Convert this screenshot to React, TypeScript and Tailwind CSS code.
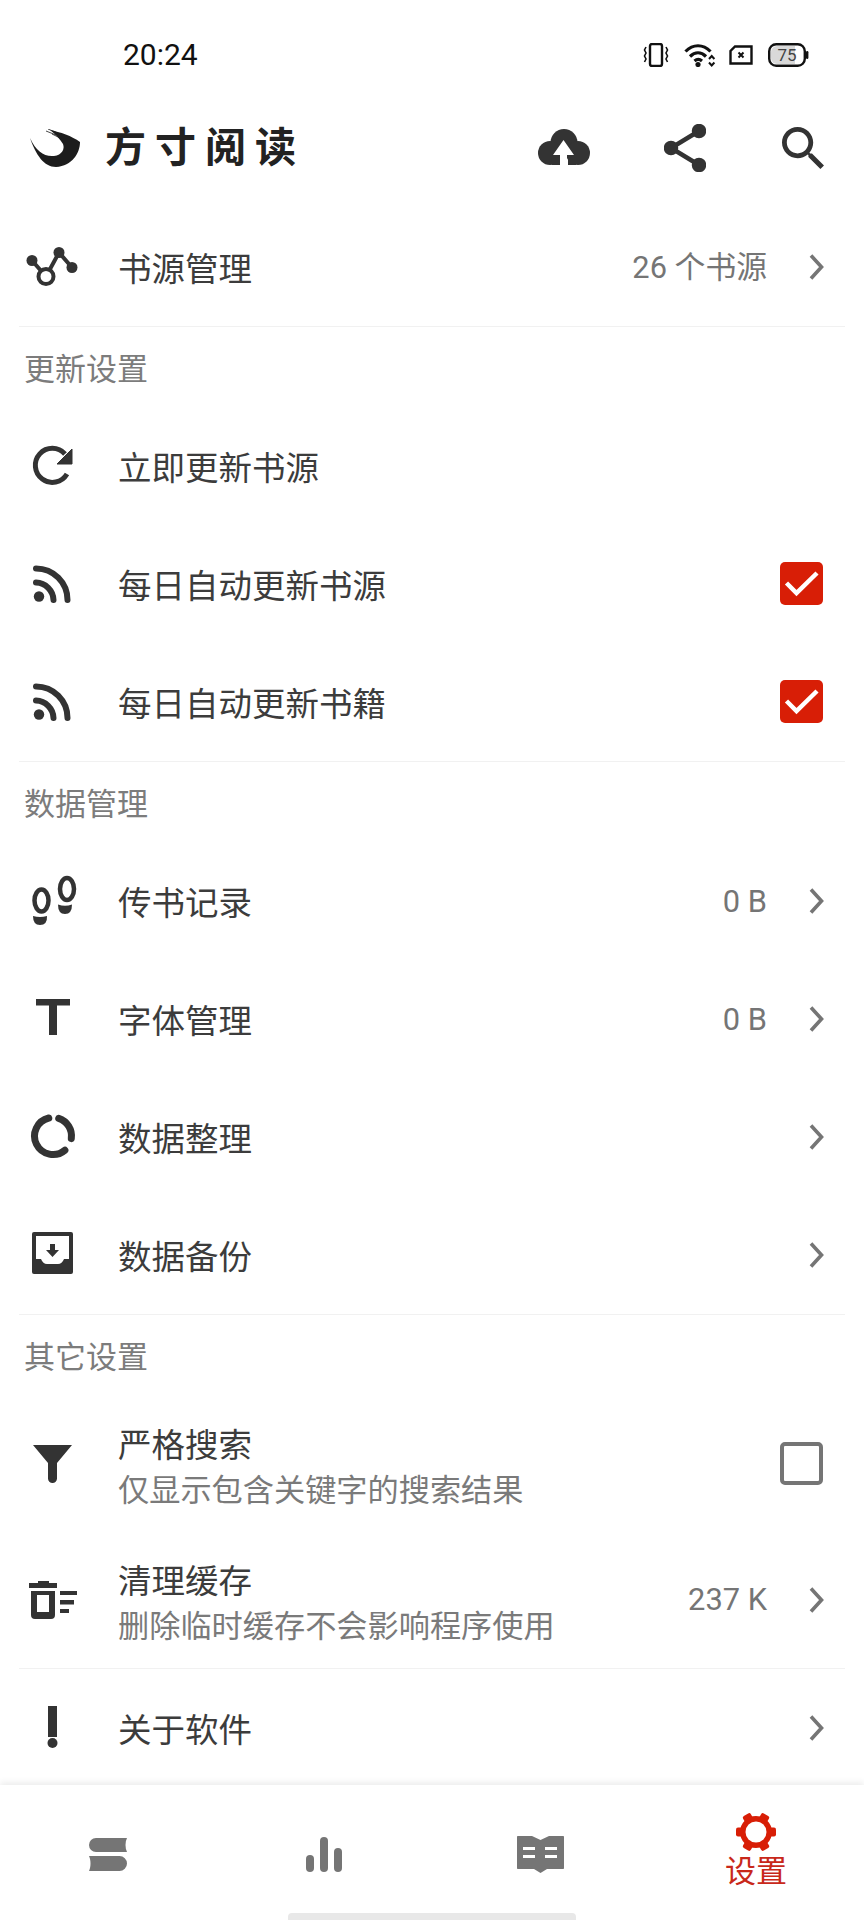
import { FC, ReactNode } from "react";

const ICON = "#333333";
const RED = "#d81e06";

const Icon: FC<{ children: ReactNode }> = ({ children }) => (
  <svg viewBox="0 0 64 64" className="ml-[20px] h-[64px] w-[64px] shrink-0" fill={ICON}>
    {children}
  </svg>
);

const Chevron: FC = () => (
  <svg viewBox="0 0 32 32" className="h-[32px] w-[32px] shrink-0" fill="none" stroke="#757575" strokeWidth="3.6">
    <path d="M11 4.500 21.500 16 11 27.500" />
  </svg>
);

const Checkbox: FC<{ checked?: boolean }> = ({ checked }) =>
  checked ? (
    <div className="mb-[2px] mr-[41px] h-[43px] w-[43px] shrink-0 rounded-[5px] bg-[#d81e06]">
      <svg viewBox="0 0 43 43" className="h-[43px] w-[43px]" fill="none" stroke="#ffffff" strokeWidth="4.5">
        <path d="M6.500 21 16.500 31 37 11" />
      </svg>
    </div>
  ) : (
    <div className="mr-[41px] h-[43px] w-[43px] shrink-0 rounded-[5px] border-[4px] border-[#757575]" />
  );

type RowProps = {
  icon: ReactNode;
  title: string;
  sub?: string;
  value?: string;
  arrow?: boolean;
  right?: ReactNode;
  height?: string;
};

const Row: FC<RowProps> = ({ icon, title, sub, value, arrow, right, height = "h-[118px]" }) => (
  <div className={`flex items-center ${height}`}>
    {icon}
    <div className={`ml-[34px] min-w-0 flex-1 ${sub ? "pt-[9px]" : "pt-[4px]"}`}>
      <div className="text-[33.5px] leading-[43px] text-[#3c3c3c]">{title}</div>
      {sub && <div className="mt-[2px] text-[31.2px] leading-[43px] text-[#7a7a7a]">{sub}</div>}
    </div>
    {value && <span className="mr-[33px] pt-[2px] text-[30.8px] text-[#757575]">{value}</span>}
    {arrow && (
      <div className="mr-[32px]">
        <Chevron />
      </div>
    )}
    {right}
  </div>
);

const Divider: FC = () => <div className="mx-[19px] h-px bg-[#f1f1f1]" />;

const Section: FC<{ title: string }> = ({ title }) => (
  <div className="flex h-[80px] items-center pl-[24px] pt-[6px] text-[31px] text-[#7c7c7c]">{title}</div>
);

const StatusBar: FC = () => (
  <div className="flex h-[100px] items-center pt-[10px]">
    <span className="ml-[123px] text-[30px] leading-none text-[#111111]">20:24</span>
    <div className="ml-auto mr-[55px] flex items-center">
      <svg viewBox="0 0 26 24" className="h-[24px] w-[26px]" fill="none" stroke="#111111" strokeWidth="2">
        <rect x="7" y="1" width="12" height="22" rx="2" strokeWidth="2.4" />
        <path d="M3 4 1.500 7 3 10 1.500 13 3 16 1.500 19M23 4l1.500 3L23 10l1.500 3L23 16l1.500 3" strokeWidth="1.6" />
      </svg>
      <svg viewBox="0 0 32 24" className="ml-[15px] h-[24px] w-[32px]" fill="none" stroke="#111111" strokeWidth="3.2">
        <path d="M1.500 8.500C9 .8 19 .8 26.500 8.500M6 13.500c5-4.800 11-4.800 16 0M10.500 18c2.500-2.200 5-2.200 7.500 0" />
        <circle cx="14" cy="21.500" r="2.600" fill="#111111" stroke="none" />
        <path d="M25 16l2.700-3 2.700 3M25 19.500l2.700 3 2.700-3" strokeWidth="2" />
      </svg>
      <svg viewBox="0 0 24 20" className="ml-[13px] h-[20px] w-[24px]" fill="none" stroke="#111111" strokeWidth="2.4">
        <path d="M6 1.500H22.500V18.500H1.500V6Z" />
        <path d="M9.500 7.500l5 5M14.500 7.500l-5 5" strokeWidth="2" />
      </svg>
      <svg viewBox="0 0 41 24" className="ml-[15px] h-[24px] w-[41px]">
        <rect x="1.200" y="1.200" width="35.600" height="21.600" rx="7" fill="#ffffff" stroke="#111111" strokeWidth="2.4" />
        <path d="M3 9a6 6 0 0 1 6-6h18v18H9a6 6 0 0 1-6-6Z" fill="#d9d9d9" />
        <rect x="38" y="8" width="2.400" height="8" rx="1.200" fill="#111111" />
        <text x="19" y="18" textAnchor="middle" fontSize="17" fill="#444444" fontFamily="Roboto, sans-serif">
          75
        </text>
      </svg>
    </div>
  </div>
);

const Header: FC = () => (
  <div className="flex h-[96px] items-center">
    <svg viewBox="0 0 50 38" className="ml-[30px] h-[38px] w-[50px]" fill="#1c1c1c">
      <path d="M0 9C6 22 14 28 24 27 32 26 35 20 33 15 30 10 26 6 20 1 30 3 42 7 50 13 50 24 42 37 26 38 14 38 6 26 0 9Z" />
      <path d="M16 2 26 6M18 0 30 5M22 5 32 10" fill="none" stroke="#1c1c1c" strokeWidth="0.8" />
    </svg>
    <div className="ml-[25px] flex gap-[9px] text-[41px] font-bold leading-none text-[#222222]">
      <span>方</span>
      <span>寸</span>
      <span>阅</span>
      <span>读</span>
    </div>
    <div className="ml-auto flex items-center">
      <svg viewBox="0 -2 52 42" className="h-[42px] w-[52px]" fill={ICON}>
        <circle cx="26" cy="13.500" r="13.500" />
        <circle cx="12" cy="24" r="12" />
        <circle cx="40" cy="24" r="12" />
        <path d="M12 20H22V36H14ZM30 20H38V36H30Z" />
        <path d="M25.500 11 15 26H22V36H29V26H36Z" fill="#ffffff" />
      </svg>
      <svg viewBox="0 0 42 48" className="ml-[74px] h-[48px] w-[42px]" fill={ICON} stroke={ICON} strokeWidth="4.5">
        <path d="M35 7 7 24l28 17" fill="none" />
        <circle cx="35" cy="7" r="5" />
        <circle cx="7" cy="24" r="5" />
        <circle cx="35" cy="41" r="5" />
      </svg>
      <svg viewBox="3 3 17.500 17.500" className="ml-[76px] mr-[40px] h-[42px] w-[42px]" fill={ICON}>
        <path d="M15.500 14h-.79l-.28-.27C15.410 12.590 16 11.110 16 9.500 16 5.910 13.090 3 9.500 3S3 5.910 3 9.500 5.910 16 9.500 16c1.610 0 3.090-.59 4.230-1.570l.27.28v.79l5 4.990L20.490 19l-4.990-5zm-6 0C7.010 14 5 11.990 5 9.500S7.010 5 9.500 5 14 7.010 14 9.500 11.990 14 9.500 14z" />
      </svg>
    </div>
  </div>
);

const RssIcon: FC = () => (
  <Icon>
    <circle cx="19" cy="44.500" r="5.200" />
    <path d="M16 30.500A18 18 0 0 1 33.500 48M16 16.500A31.500 31.500 0 0 1 47.500 48" fill="none" stroke={ICON} strokeWidth="6" strokeLinecap="round" />
  </Icon>
);

const BottomNav: FC = () => (
  <div className="relative bg-white shadow-[0_-3px_6px_rgba(0,0,0,0.07)]">
    <div className="grid h-[128px] grid-cols-4">
      <div className="flex items-center justify-center pt-[10px]">
        <svg viewBox="0 0 38 33" className="h-[33px] w-[38px]" fill="#757575">
          <path d="M7 0H38C36 4 36 10 38 14H7A7 7 0 0 1 7 0Z" />
          <path d="M0 18H30.500A7.500 7.500 0 0 1 30.500 33H0C2 29 2 22 0 18Z" />
        </svg>
      </div>
      <div className="flex items-center justify-center pt-[10px]">
        <svg viewBox="0 0 36 35" className="h-[35px] w-[36px]" fill="#757575">
          <rect x="0" y="18" width="8" height="17" rx="4" />
          <rect x="14" y="0" width="8" height="35" rx="4" />
          <rect x="28" y="11" width="8" height="24" rx="4" />
        </svg>
      </div>
      <div className="flex items-center justify-center pt-[10px]">
        <svg viewBox="0 0 47 37" className="h-[37px] w-[47px]" fill="#757575">
          <path d="M1 0H15L23.500 4 32 0H46C46.600 0 47 .4 47 1V32C47 32.600 46.600 33 46 33H30L23.500 37 17 33H1C.4 33 0 32.600 0 32V1C0 .4.4 0 1 0Z" />
          <path d="M6 11h12v3H6ZM6 19h12v3H6ZM28 11h12v3H28ZM28 19h12v3H28Z" fill="#ffffff" />
        </svg>
      </div>
      <div className="flex flex-col items-center pt-[27px]">
        <svg viewBox="0 0 40 40" className="h-[40px] w-[40px]" fill={RED}>
          <circle cx="20" cy="20" r="16" />
          {[0, 60, 120, 180, 240, 300].map((deg) => (
            <rect key={deg} x="33" y="15.500" width="7" height="9" rx="2" transform={`rotate(${deg} 20 20)`} />
          ))}
          <circle cx="20" cy="20" r="10.500" fill="#ffffff" />
        </svg>
        <span className="mt-[2px] text-[31px] leading-[36px] text-[#c8281a]">设置</span>
      </div>
    </div>
    <div className="mx-auto h-[7px] w-[288px] rounded-t-[4px] bg-[#e8e8e8]" />
  </div>
);

export default function App() {
  return (
    <div className="flex h-[1920px] w-[864px] flex-col overflow-hidden bg-white font-[Roboto,'Noto_Sans_CJK_SC',sans-serif]">
      <StatusBar />
      <Header />
      <div className="min-h-0 flex-1 pt-[12px]">
        <Row
          title="书源管理"
          value="26 个书源"
          arrow
          icon={
            <Icon>
              <path d="M12 25.500 26 41.500M26 41.500 39 17.500 52 32.500" fill="none" stroke={ICON} strokeWidth="4" />
              <circle cx="12" cy="25.500" r="5.500" />
              <circle cx="39" cy="17.500" r="5.500" />
              <circle cx="52" cy="32.500" r="5.500" />
              <circle cx="26" cy="41.500" r="7.500" fill="#ffffff" stroke={ICON} strokeWidth="4" />
            </Icon>
          }
        />
        <Divider />
        <Section title="更新设置" />
        <Row
          title="立即更新书源"
          icon={
            <Icon>
              <path d="M47 40A17 17 0 1 1 45 20" fill="none" stroke={ICON} strokeWidth="5" />
              <path d="M52 15V30H37Z" stroke={ICON} strokeWidth="1" strokeLinejoin="round" />
            </Icon>
          }
        />
        <Row title="每日自动更新书源" icon={<RssIcon />} right={<Checkbox checked />} />
        <Row title="每日自动更新书籍" icon={<RssIcon />} right={<Checkbox checked />} />
        <Divider />
        <Section title="数据管理" />
        <Row
          title="传书记录"
          value="0 B"
          arrow
          icon={
            <Icon>
              <ellipse cx="21.500" cy="31.500" rx="7" ry="11" fill="#ffffff" stroke={ICON} strokeWidth="4.500" />
              <path d="M13 47Q20 49 27 47 27.500 56 20 56 13 56 13 47Z" />
              <ellipse cx="47" cy="20" rx="7" ry="11" fill="#ffffff" stroke={ICON} strokeWidth="4.500" />
              <path d="M38 35.500Q45 38 52 35.500 52 45 45 45 38 45 38 35.500Z" />
            </Icon>
          }
        />
        <Row
          title="字体管理"
          value="0 B"
          arrow
          icon={
            <Icon>
              <path d="M16 12H50V18.500H37V48H29V18.500H16Z" />
            </Icon>
          }
        />
        <Row
          title="数据整理"
          arrow
          icon={
            <Icon>
              <path d="M28.800 13A18.500 18.500 0 1 0 44.900 45.200M38.700 13.400A18.500 18.500 0 0 1 51.300 33.600" fill="none" stroke={ICON} strokeWidth="7" strokeLinecap="round" />
            </Icon>
          }
        />
        <Row
          title="数据备份"
          arrow
          icon={
            <Icon>
              <rect x="12" y="9" width="41" height="42" rx="2" />
              <path d="M16 13H49V36H44Q42 41 38 41H27Q23 41 21 36H16Z" fill="#ffffff" />
              <path d="M30 21H35V27H39L32.500 34 26 27H30Z" />
            </Icon>
          }
        />
        <Divider />
        <Section title="其它设置" />
        <Row
          title="严格搜索"
          sub="仅显示包含关键字的搜索结果"
          height="h-[136px]"
          right={<Checkbox />}
          icon={
            <Icon>
              <path d="M13 14H52L37 32V47.500A4.500 4.500 0 0 1 28 47.500V32Z" />
            </Icon>
          }
        />
        <Row
          title="清理缓存"
          sub="删除临时缓存不会影响程序使用"
          value="237 K"
          arrow
          height="h-[137px]"
          icon={
            <Icon>
              <path d="M18 13H29V15H37V20H9V15H18Z" />
              <path d="M11 23H35V47A4 4 0 0 1 31 51H15A4 4 0 0 1 11 47ZM17 27V44H29V27Z" fillRule="evenodd" />
              <path d="M40 23H57V27H40ZM40 32H54V36.500H40ZM40 41H49V45H40Z" />
            </Icon>
          }
        />
        <Divider />
        <Row
          title="关于软件"
          arrow
          icon={
            <Icon>
              <rect x="28" y="10" width="9" height="31" />
              <circle cx="32.500" cy="47" r="5" />
            </Icon>
          }
        />
      </div>
      <BottomNav />
    </div>
  );
}
